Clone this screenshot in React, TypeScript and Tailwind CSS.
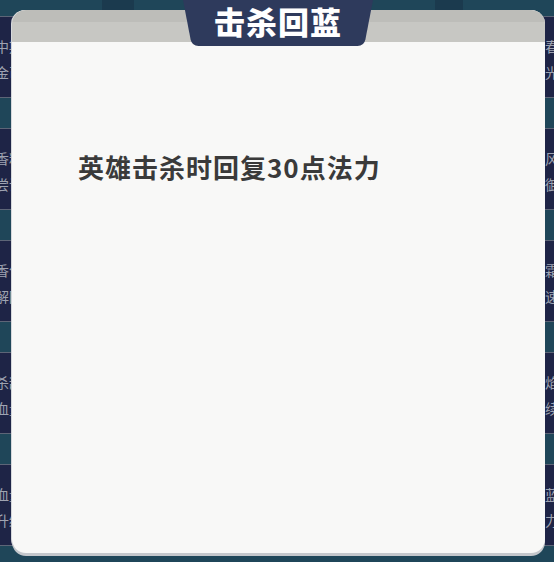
import React from 'react';

type Card = { line1: string; line2: string };

// left and right columns of skill cards that sit behind the popup
const leftCards: Card[] = [
  { line1: '中期金币', line2: '金币加成' },
  { line1: '香料补给', line2: '尝试回复' },
  { line1: '香气护盾', line2: '解除控制' },
  { line1: '杀敌回血', line2: '血量提升' },
  { line1: '血量上限', line2: '升级强化' },
];

const rightCards: Card[] = [
  { line1: '长春之力', line2: '阳光恢复' },
  { line1: '疾风步伐', line2: '防御加成' },
  { line1: '冰霜之力', line2: '减速效果' },
  { line1: '火焰附加', line2: '持续灼烧' },
  { line1: '回蓝强化', line2: '法力提升' },
];

function SkillCard({ card }: { card?: Card }) {
  return (
    <div className="h-[82px] border-y border-[#5d6577] bg-[#1e2446] px-2 pt-4 text-[14px] leading-[26px] text-[#9ea3b1]">
      {card && (
        <>
          <div>{card.line1}</div>
          <div>{card.line2}</div>
        </>
      )}
    </div>
  );
}

function CardColumn({ cards }: { cards: (Card | undefined)[] }) {
  return (
    <div className="flex flex-col gap-[30px]">
      {cards.map((card, i) => (
        <SkillCard key={i} card={card} />
      ))}
    </div>
  );
}

function TabShape() {
  return (
    <svg className="absolute inset-0" width="190" height="46" viewBox="0 0 190 46">
      <path d="M0 0 H190 L182.4 39.5 Q181 46 174.5 46 H15.5 Q9 46 7.6 39.5 Z" fill="#2e3a5c" />
    </svg>
  );
}

export default function App() {
  return (
    <div className="relative h-[562px] w-[554px] overflow-hidden bg-[#1f4659] font-['Noto_Sans_CJK_SC',sans-serif]">
      {/* top strip of the page */}
      <div className="flex h-4">
        <div className="ml-[102px] w-[32px] bg-[#1b3a4e]" />
        <div className="ml-[301px] w-[28px] bg-[#1b3a4e]" />
      </div>

      <div className="-ml-[13px] grid grid-cols-[258px_258px_258px] gap-x-[10px]">
        <CardColumn cards={leftCards} />
        <CardColumn cards={[undefined, undefined, undefined, undefined, undefined]} />
        <CardColumn cards={rightCards} />
      </div>

      {/* popup */}
      <div className="absolute left-[12px] top-[10px] flex h-[543px] w-[533px] flex-col overflow-hidden rounded-[14px] bg-[#f8f8f7] shadow-[0_3px_0_#c4c7cc,-1px_0_0_#d6d8dc]">
        <div className="h-[12px] bg-[#bdbdb9]" />
        <div className="h-[20px] bg-[#c7c7c3]" />
        <div className="pl-[66px] pt-[107px] text-[26px] font-bold leading-[36px] tracking-[1px] text-[#3a3a3a]">
          英雄击杀时回复30点法力
        </div>
      </div>

      <div className="absolute left-[183px] top-0 h-[46px] w-[190px]">
        <TabShape />
        <div className="relative flex h-full items-center justify-center pb-[5px] text-[31px] font-black leading-none tracking-[1px] text-white">
          击杀回蓝
        </div>
      </div>
    </div>
  );
}
